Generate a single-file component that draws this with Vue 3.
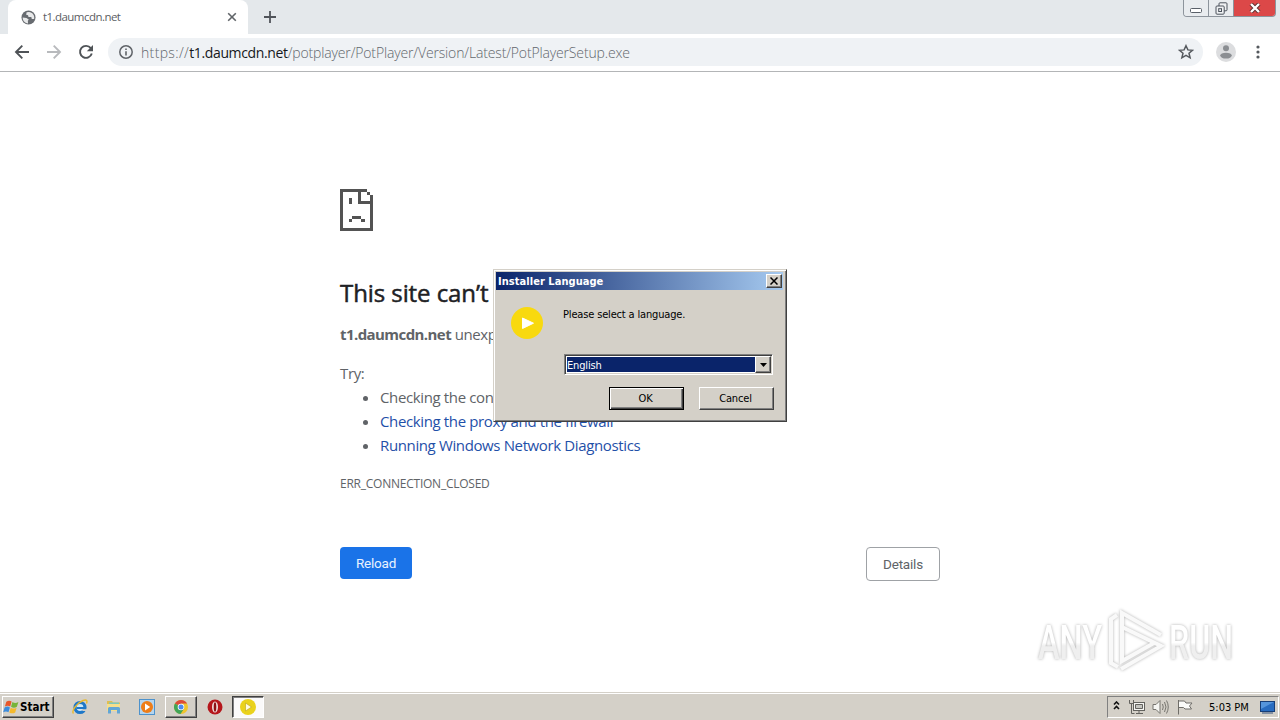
<template>
  <div class="screen">
    <!-- Tab strip -->
    <header class="tabstrip">
      <div class="tab">
        <svg class="globe" viewBox="0 0 16 16">
          <circle cx="8" cy="8" r="7.5" fill="#676b70" />
          <path d="M1.800 8l4 .5 2.500 1.500-1 1.500.2 2.800C4 14 1.800 11.500 1.800 8z M6 2.500L5.500 5l2 .5L8 7.500h3l.5 2h2.500C15 6 12 2 8.500 2z" fill="#fff" opacity=".85" />
        </svg>
        <span class="tab-title">t1.daumcdn.net</span>
        <svg class="tab-close" viewBox="0 0 10 10"><path d="M1.2 1.2l7.6 7.6M8.8 1.2L1.2 8.8" stroke="#606468" stroke-width="1.6" /></svg>
      </div>
      <svg class="new-tab" viewBox="0 0 12 12"><path d="M6 0v12M0 6h12" stroke="#50545a" stroke-width="1.8" /></svg>
      <div class="win-controls">
        <button class="win-btn min">
          <svg viewBox="0 0 12 5"><rect x=".5" y=".5" width="11" height="4" rx="1" fill="#fff" stroke="#5a6069" /></svg>
        </button>
        <button class="win-btn max">
          <svg viewBox="0 0 13 13" fill="#eef0f2" stroke="#4c535c">
            <rect x="4" y=".8" width="8" height="8" rx="1" />
            <rect x="1" y="4" width="8.2" height="8.2" rx="1" />
            <rect x="3.7" y="6.7" width="2.8" height="2.8" />
          </svg>
        </button>
        <button class="win-btn close">
          <svg viewBox="0 0 12 10"><path d="M2 1l8 8M10 1L2 9" stroke="#5b3030" stroke-width="4.2" /><path d="M2 1l8 8M10 1L2 9" stroke="#fff" stroke-width="2.4" /></svg>
        </button>
      </div>
    </header>

    <!-- Toolbar -->
    <nav class="toolbar">
      <svg class="nav-icon" viewBox="0 0 16 16"><path d="M15 8H2M8.3 1.7L2 8l6.3 6.3" fill="none" stroke="#4f5357" stroke-width="1.9" /></svg>
      <svg class="nav-icon" viewBox="0 0 16 16"><path d="M1 8h13M7.7 1.7L14 8l-6.3 6.3" fill="none" stroke="#b8babd" stroke-width="1.9" /></svg>
      <svg class="nav-icon" viewBox="0 0 16 16">
        <path d="M12.8 4.2A6 6 0 1 0 13.8 9.6" fill="none" stroke="#4f5357" stroke-width="1.9" />
        <path d="M15 1v6.2H8.8z" fill="#4f5357" />
      </svg>
      <div class="omnibox">
        <svg class="info" viewBox="0 0 14 14">
          <circle cx="7" cy="7" r="6.2" fill="none" stroke="#5f6368" stroke-width="1.5" />
          <path d="M7 6.2v4.3M7 3.4v1.6" stroke="#5f6368" stroke-width="1.6" />
        </svg>
        <span class="url"><span class="scheme">https://</span><b>t1.daumcdn.net</b>/potplayer/PotPlayer/Version/Latest/PotPlayerSetup.exe</span>
        <svg class="star" viewBox="0 0 16 16"><path d="M8 1.7l1.9 4.2 4.6.4-3.5 3 1.1 4.5L8 11.4l-4.1 2.4L5 9.3l-3.5-3 4.6-.4z" fill="none" stroke="#55595e" stroke-width="1.5" /></svg>
      </div>
      <svg class="avatar" viewBox="0 0 20 20">
        <circle cx="10" cy="10" r="10" fill="#dcdddf" />
        <circle cx="10" cy="6.3" r="3" fill="#8b8e92" />
        <ellipse cx="10" cy="13.6" rx="5.8" ry="2.9" fill="#8b8e92" />
      </svg>
      <svg class="dots" viewBox="0 0 4 14" fill="#55595e"><circle cx="2" cy="2" r="1.6" /><circle cx="2" cy="7" r="1.6" /><circle cx="2" cy="12" r="1.6" /></svg>
    </nav>

    <!-- Error page -->
    <main class="page">
      <section class="error">
        <svg class="sad" viewBox="0 0 33 42" shape-rendering="crispEdges" fill="#535353">
          <path d="M0 0h27v3H3v36h27V15H18V3h3v9h9V9h3v33H0z" />
          <path d="M27 3h3v3h-3zM30 6h3v3h-3zM9 9h3v6H9zM9 30h3v3H9zM12 27h9v3h-9zM21 30h4v3h-4z" />
        </svg>
        <h1>This site can’t be reached</h1>
        <p class="summary"><strong>t1.daumcdn.net</strong> unexpectedly closed the connection.</p>
        <p class="try">Try:</p>
        <ul>
          <li v-for="item in suggestions" :key="item.text">
            <a v-if="item.link" href="#" @click.prevent>{{ item.text }}</a>
            <span v-else>{{ item.text }}</span>
          </li>
        </ul>
        <p class="code">ERR_CONNECTION_CLOSED</p>
        <div class="actions">
          <button class="reload">Reload</button>
          <button class="details">Details</button>
        </div>
      </section>
    </main>

    <!-- Taskbar -->
    <footer class="taskbar">
      <button class="start">
        <svg viewBox="0 0 18 16">
          <path d="M3.5 2.5c2-1.4 4-1.3 5.6-.2L7.6 7.5C6 6.4 4 6.400 2 7.500z" fill="#e8572a" />
          <path d="M10 2.800c2 1.200 4 1.200 6.300 0l-1.600 5c-2 1.200-4.200 1.200-6.200 0z" fill="#77b43a" />
          <path d="M1.700 8.500c2-1.200 4-1.200 5.600-.1L5.800 13.500c-1.600-1.100-3.600-1.100-5.600 0z" fill="#3c8cdc" />
          <path d="M8.200 8.800c2 1.200 4 1.200 6.200 0l-1.500 5c-2.200 1.200-4.200 1.200-6.200 0z" fill="#f5b92c" />
        </svg>
        <span>Start</span>
      </button>
      <div class="task">
        <svg viewBox="0 0 16 16">
          <circle cx="8" cy="8.500" r="5" fill="#cfe8f8" stroke="#1f78c8" stroke-width="3.200" />
          <path d="M4.500 9H13" stroke="#1f78c8" stroke-width="2" />
          <path d="M9.800 10.300h6v1.700h-5.300z" fill="#d4d0c8" />
          <path d="M1.500 14.500C-1 12 5 4 11 1.500c4-1.500 4.500.5 3.500 3" fill="none" stroke="#e9b92d" stroke-width="1.400" />
        </svg>
      </div>
      <div class="task">
        <svg viewBox="0 0 16 16">
          <path d="M1 2h5l1 1.500h7V11H1z" fill="#e0be52" />
          <path d="M3 3.500h10V8H3z" fill="#7cc8bc" />
          <path d="M1 5h13v7H1z" fill="#f6df8c" />
          <path d="M2 14.500V9.500q0-1.500 1.500-1.500h9q1.500 0 1.500 1.500v5h-3V11H5v3.500z" fill="#62a6d6" />
        </svg>
      </div>
      <div class="task">
        <svg viewBox="0 0 16 16">
          <rect x=".5" y=".5" width="15" height="15" fill="#b5d5ee" stroke="#4d92cc" />
          <circle cx="8" cy="8" r="6" fill="#ee7d18" />
          <path d="M6 4.500v7l5.200-3.500z" fill="#fff" />
        </svg>
      </div>
      <div class="task raised">
        <svg viewBox="0 0 16 16">
          <circle cx="8" cy="8" r="7" fill="#f0c52e" />
          <path d="M8 8L1.900 4.500A7 7 0 0 1 14.100 4.500H8z" fill="#dc4a3a" />
          <path d="M8 8L1.900 4.500A7 7 0 0 0 7.500 15L11 9.700z" fill="#41a557" />
          <circle cx="8" cy="8" r="3.300" fill="#fff" />
          <circle cx="8" cy="8" r="2.500" fill="#4d8af0" />
        </svg>
      </div>
      <div class="task">
        <svg viewBox="0 0 16 16">
          <ellipse cx="8" cy="8" rx="7.500" ry="7.600" fill="#b5161b" />
          <ellipse cx="8" cy="8" rx="3" ry="5.600" fill="#f0e0de" />
          <ellipse cx="8" cy="8" rx="1.300" ry="4.800" fill="#8d1014" />
        </svg>
      </div>
      <div class="task pressed">
        <svg viewBox="0 0 16 16">
          <circle cx="8" cy="8" r="8" fill="#ead21c" />
          <path d="M5.500 4v8l6-4z" fill="#fffbe0" stroke="#b9a315" stroke-width=".6" />
        </svg>
      </div>
      <div class="tray">
        <svg class="chevrons" viewBox="0 0 7 9"><path d="M1 3.500L3.500 1 6 3.500M1 8l2.500-2.500L6 8" fill="none" stroke="#111" stroke-width="1.600" /></svg>
        <svg class="net" viewBox="0 0 16 16" fill="#f5f5f2" stroke="#63625e">
          <rect x="4.500" y="3.500" width="11" height="8" /><path d="M6.500 5.500h7v4h-7z" fill="#c5c5c0" /><path d="M7 14.500h7M10 12v2" />
          <path d="M.5 1v3.500h4V1M2.500 4.500v10h3" fill="none" />
        </svg>
        <svg class="sound" viewBox="0 0 17 16" fill="#f5f5f2" stroke="#77756f">
          <path d="M1 5.500h3L8 1.500v13L4 10.500H1z" /><path d="M10.500 5q1.500 3 0 6M12.500 3q3 5 0 10M14.500 1.500q3.500 6.500 0 13" fill="none" />
        </svg>
        <svg class="flag" viewBox="0 0 16 16" fill="#fafaf8" stroke="#6f6d68"><path d="M1.500 1v14.500M1.500 2h6l1.500 2h6l-2.500 3 2 3H8L6.500 8.500h-5" /></svg>
        <span class="clock">5:03 PM</span>
        <svg class="desktop" viewBox="0 0 15 13"><rect x=".5" y=".5" width="14" height="10" fill="#286cc0" stroke="#173e77" /><path d="M1 1h13L1 8z" fill="#68a7e8" opacity=".7" /><path d="M2 12h11" stroke="#35527e" /></svg>
      </div>
    </footer>

    <!-- Installer dialog window -->
    <div class="dialog">
      <div class="dialog-title">
        <span>Installer Language</span>
        <button class="dialog-close"><svg viewBox="0 0 8 8"><path d="M.5.5l7 7M7.500.5l-7 7" stroke="#000" stroke-width="1.500" /></svg></button>
      </div>
      <div class="dialog-body">
        <svg class="pot" viewBox="0 0 32 32"><circle cx="16" cy="16" r="16" fill="#f8d90f" /><path d="M11.500 11v10.500L22.500 16.200z" fill="#fff" stroke="#fff" stroke-linejoin="round" /></svg>
        <div class="dialog-main">
          <p>Please select a language.</p>
          <div class="combo">
            <span class="combo-value">{{ language }}</span>
            <span class="combo-arrow"><svg viewBox="0 0 7 4"><path d="M0 0h7L3.500 4z" /></svg></span>
          </div>
          <div class="dialog-actions">
            <button class="dlg-btn default">OK</button>
            <button class="dlg-btn">Cancel</button>
          </div>
        </div>
      </div>
    </div>

    <!-- Watermark -->
    <svg class="watermark" viewBox="0 0 230 80">
      <defs>
        <linearGradient id="fade" x1="0" y1="0" x2="0" y2="1">
          <stop offset=".5" stop-color="#fff" />
          <stop offset=".56" stop-color="#efefef" />
        </linearGradient>
      </defs>
      <g class="mark">
        <text x="3" y="53" textLength="64" lengthAdjust="spacingAndGlyphs">ANY</text>
        <text x="134" y="53" textLength="64" lengthAdjust="spacingAndGlyphs">RUN</text>
        <path d="M82 9l-6 4v44l7 4M87 43V7l39 22M87 21l39 19-40 23M87 21v34l32-18" />
      </g>
    </svg>
  </div>
</template>

<script setup>
import { ref } from 'vue'

const language = ref('English')

const suggestions = [
  { text: 'Checking the connection', link: false },
  { text: 'Checking the proxy and the firewall', link: true },
  { text: 'Running Windows Network Diagnostics', link: true }
]
</script>

<style>
body {
  margin: 0;
  overflow: hidden;
}
</style>

<style scoped>
* {
  box-sizing: border-box;
}

svg {
  display: block;
  flex-shrink: 0;
}

button {
  font-family: inherit;
  padding: 0;
}

.screen {
  position: relative;
  display: flex;
  flex-direction: column;
  width: 1280px;
  height: 720px;
  background: #fff;
  font-family: 'Open Sans', 'Noto Sans', sans-serif;
  overflow: hidden;
}

/* Tab strip */
.tabstrip {
  display: flex;
  height: 34px;
  padding-left: 8px;
  background: #e4e8eb;
}

.tab {
  display: flex;
  align-items: center;
  width: 240px;
  padding: 0 11px 0 13px;
  background: #fff;
  border-radius: 8px 8px 0 0;
}

.globe {
  width: 15px;
  height: 15px;
}

.tab-title {
  flex: 1;
  margin-left: 7px;
  padding-bottom: 2px;
  font-size: 11.5px;
  letter-spacing: -0.55px;
  color: #5c6064;
}

.tab-close {
  width: 10px;
  height: 10px;
}

.new-tab {
  width: 12px;
  height: 12px;
  margin: 11px 0 0 16px;
}

.win-controls {
  display: flex;
  height: 17px;
  margin-left: auto;
  margin-right: 4px;
  border: 1px solid #8d949c;
  border-top: 0;
  border-radius: 0 0 4px 4px;
  overflow: hidden;
}

.win-btn {
  display: flex;
  align-items: center;
  justify-content: center;
  width: 25px;
  border: 0;
  border-right: 1px solid #8d949c;
  background: #e9ecef;
}

.win-btn.min svg {
  width: 12px;
  height: 5px;
  margin-top: 4px;
}

.win-btn.max svg {
  width: 13px;
  height: 13px;
}

.win-btn.close {
  width: 41px;
  border-right: 0;
  background: #dc4848;
}

.win-btn.close svg {
  width: 12px;
  height: 10px;
}

/* Toolbar */
.toolbar {
  display: flex;
  align-items: center;
  height: 38px;
  padding: 0 20px 1px 14px;
  border-bottom: 1px solid #b3b5b7;
}

.nav-icon {
  width: 16px;
  height: 16px;
  margin-right: 16px;
}

.omnibox {
  display: flex;
  align-items: center;
  width: 1095px;
  height: 28px;
  margin-left: -2px;
  padding: 0 9px 0 11px;
  border-radius: 14px;
  background: #eff2f5;
}

.info {
  width: 14px;
  height: 14px;
}

.url {
  flex: 1;
  margin-left: 8px;
  font-size: 14px;
  font-weight: 300;
  letter-spacing: -0.15px;
  color: #62676c;
  white-space: nowrap;
}

.url .scheme {
  letter-spacing: 0.35px;
}

.url b {
  font-weight: 400;
  letter-spacing: -0.36px;
  color: #16181b;
}

.star {
  width: 16px;
  height: 16px;
}

.avatar {
  width: 20px;
  height: 20px;
  margin-left: 13px;
}

.dots {
  width: 4px;
  height: 14px;
  margin-left: 20px;
}

/* Error page */
.page {
  flex: 1;
}

.error {
  width: 600px;
  margin: 0 auto;
  padding-top: 117px;
  font-size: 15px;
  line-height: 24px;
  letter-spacing: -0.37px;
  color: #606367;
}

.sad {
  width: 33px;
  height: 42px;
}

h1 {
  margin: 47px 0 0;
  font-size: 24px;
  font-weight: 400;
  line-height: 30px;
  letter-spacing: -0.08px;
  color: #202124;
  -webkit-text-stroke: 0.5px #202124;
}

p {
  margin: 0;
}

.summary {
  margin-top: 14px;
}

.summary strong {
  letter-spacing: -0.57px;
}

.try {
  margin-top: 15px;
}

ul {
  margin: 0;
  padding-left: 40px;
}

a {
  color: #1f50a8;
  text-decoration: none;
}

.code {
  margin-top: 18px;
  font-size: 12px;
  line-height: 18px;
  letter-spacing: -0.24px;
}

.actions {
  display: flex;
  justify-content: space-between;
  align-items: flex-start;
  margin-top: 54px;
}

.reload,
.details {
  border-radius: 4px;
  font-family: Roboto, sans-serif;
  font-size: 13.5px;
  letter-spacing: -0.2px;
}

.reload {
  width: 72px;
  height: 32px;
  border: 0;
  background: #1a73e8;
  color: #e8f2ff;
}

.details {
  width: 74px;
  height: 34px;
  border: 1px solid #9fa2a6;
  background: #fff;
  color: #606367;
}

/* Taskbar */
.taskbar {
  display: flex;
  align-items: center;
  height: 28px;
  padding: 2px 1px 1px 2px;
  border-top: 1px solid #d4d0c8;
  box-shadow: inset 0 1px #fff;
  background: #d4d0c8;
  font-family: 'DejaVu Sans Condensed', 'DejaVu Sans', sans-serif;
  font-stretch: condensed;
}

.start {
  display: flex;
  align-items: center;
  width: 52px;
  height: 22px;
  margin-right: 10px;
  border: 1px solid;
  border-color: #fff #404040 #404040 #fff;
  box-shadow: inset -1px -1px #808080;
  background: #d4d0c8;
  font-size: 11.5px;
  font-weight: bold;
}

.start svg {
  width: 17px;
  height: 16px;
}

.task {
  display: flex;
  align-items: center;
  justify-content: center;
  width: 32px;
  height: 22px;
  margin-right: 1.7px;
}

.task svg {
  width: 16px;
  height: 16px;
}

.task.raised {
  border: 1px solid;
  border-color: #fff #404040 #404040 #fff;
  box-shadow: inset -1px -1px #808080;
}

.task.pressed {
  border: 1px solid;
  border-color: #404040 #fff #fff #404040;
  box-shadow: inset 1px 1px #808080;
  background: #fbfafa;
}

.tray {
  display: flex;
  align-items: center;
  width: 172px;
  height: 22px;
  margin-left: auto;
  padding: 0 3px 0 5px;
  border: 1px solid;
  border-color: #808080 #fff #fff #808080;
}

.chevrons {
  width: 7px;
  height: 9px;
  margin-bottom: 3px;
}

.net {
  width: 16px;
  height: 16px;
  margin-left: 9px;
}

.sound {
  width: 17px;
  height: 16px;
  margin-left: 7px;
}

.flag {
  width: 16px;
  height: 16px;
  margin-left: 8px;
}

.clock {
  margin-left: 16px;
  font-size: 11px;
  white-space: nowrap;
}

.desktop {
  width: 15px;
  height: 13px;
  margin-left: auto;
}

/* Installer dialog */
.dialog {
  position: absolute;
  left: 493px;
  top: 269px;
  width: 294px;
  height: 153px;
  padding: 2px 3px 3px;
  border: 1px solid;
  border-color: #d4d0c8 #404040 #404040 #d4d0c8;
  box-shadow: inset 1px 1px #fff, inset -1px -1px #808080;
  background: #d4d0c8;
  font-family: 'DejaVu Sans Condensed', 'DejaVu Sans', sans-serif;
  font-stretch: condensed;
  font-size: 11px;
  letter-spacing: -0.16px;
  color: #000;
}

.dialog-title {
  display: flex;
  align-items: center;
  justify-content: space-between;
  height: 18px;
  margin-left: -1px;
  padding: 0 1px 0 2px;
  background: linear-gradient(90deg, #0a246a, #a6caf0);
  color: #fff;
  font-weight: bold;
  letter-spacing: 0.05px;
}

.dialog-close {
  display: flex;
  align-items: center;
  justify-content: center;
  width: 16px;
  height: 14px;
  border: 1px solid;
  border-color: #fff #404040 #404040 #fff;
  box-shadow: inset -1px -1px #808080;
  background: #d4d0c8;
}

.dialog-close svg {
  width: 8px;
  height: 8px;
}

.dialog-body {
  display: flex;
  padding: 17px 9px 0 14px;
}

.pot {
  width: 32px;
  height: 32px;
}

.dialog-main {
  flex: 1;
  margin-left: 20px;
}

.dialog-main p {
  padding-top: 1px;
  line-height: 14px;
}

.combo {
  display: flex;
  width: 209px;
  height: 21px;
  margin: 32px 0 0 1px;
  padding: 1px;
  border: 1px solid;
  border-color: #808080 #fff #fff #808080;
  box-shadow: inset 1px 1px #404040, inset -1px -1px #d4d0c8;
  background: #fff;
}

.combo-value {
  flex: 1;
  margin: 1px 0 1px 1px;
  background: #0a246a;
  color: #fff;
  line-height: 17px;
}

.combo-arrow {
  display: flex;
  align-items: center;
  justify-content: center;
  width: 16px;
  border: 1px solid;
  border-color: #fff #404040 #404040 #fff;
  box-shadow: inset -1px -1px #808080;
  background: #d4d0c8;
}

.combo-arrow svg {
  width: 7px;
  height: 4px;
}

.dialog-actions {
  display: flex;
  gap: 15px;
  margin: 12px 0 0 46px;
}

.dlg-btn {
  width: 75px;
  height: 23px;
  padding-right: 2px;
  border: 1px solid;
  border-color: #fff #404040 #404040 #fff;
  box-shadow: inset -1px -1px #808080;
  background: #d4d0c8;
  color: #000;
  font-size: 11px;
  letter-spacing: -0.16px;
}

.dlg-btn.default {
  border-color: #000;
  box-shadow: inset 1px 1px #fff, inset -1px -1px #404040, inset -2px -2px #808080;
}

/* Watermark */
.watermark {
  position: absolute;
  left: 1035px;
  top: 606px;
  width: 230px;
  height: 80px;
}

.mark {
  font-family: Roboto, sans-serif;
  font-size: 48px;
  font-weight: 500;
  fill: url(#fade);
  filter: drop-shadow(0 0 1.5px #b0b0b0);
}

.mark path {
  fill: none;
  stroke: #f9f9f9;
  stroke-width: 4;
}
</style>
